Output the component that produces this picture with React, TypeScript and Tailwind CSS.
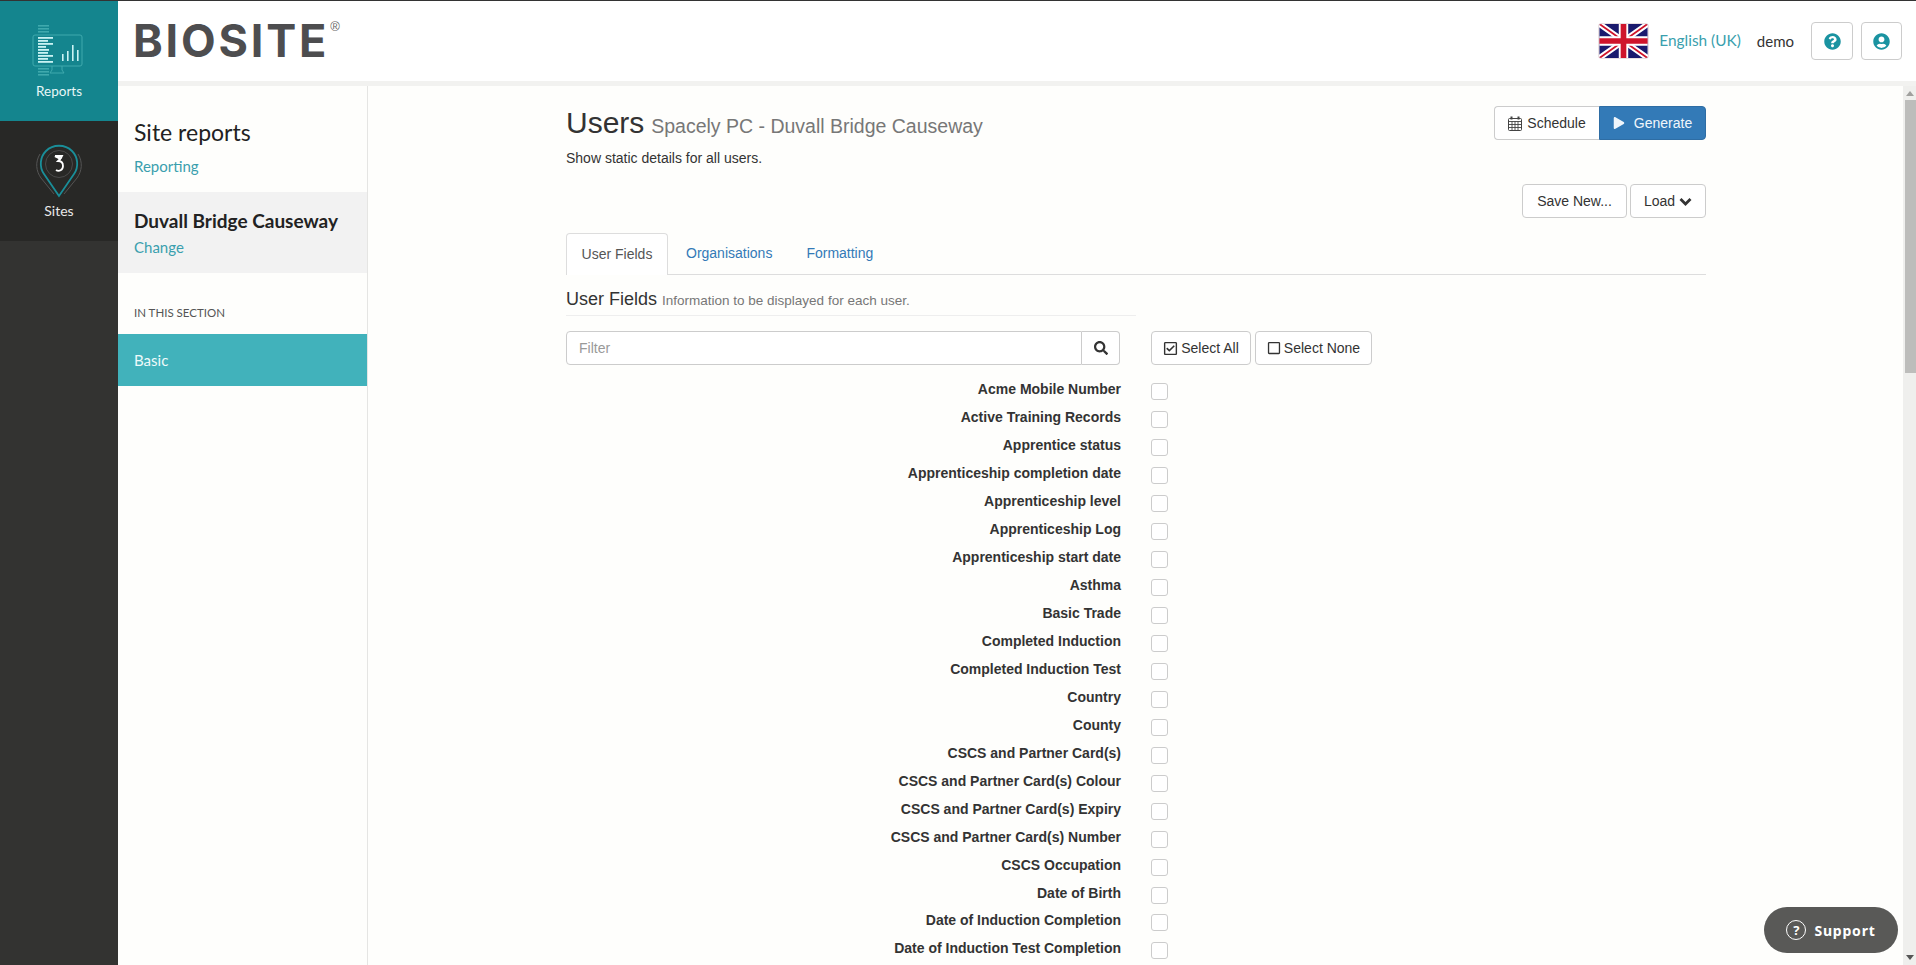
import {
  FaPlay,
  FaQuestionCircle,
  FaRegCheckSquare,
  FaRegSquare,
  FaSearch,
  FaUserCircle,
} from "react-icons/fa";

const sans = "font-['Lato','Noto_Sans',sans-serif]";

const fields = [
  "Acme Mobile Number",
  "Active Training Records",
  "Apprentice status",
  "Apprenticeship completion date",
  "Apprenticeship level",
  "Apprenticeship Log",
  "Apprenticeship start date",
  "Asthma",
  "Basic Trade",
  "Completed Induction",
  "Completed Induction Test",
  "Country",
  "County",
  "CSCS and Partner Card(s)",
  "CSCS and Partner Card(s) Colour",
  "CSCS and Partner Card(s) Expiry",
  "CSCS and Partner Card(s) Number",
  "CSCS Occupation",
  "Date of Birth",
  "Date of Induction Completion",
  "Date of Induction Test Completion",
];

const btn =
  "flex items-center justify-center h-[34px] border border-[#ccc] rounded-[4px] bg-white text-[14px] text-[#333]";

function ReportsIcon() {
  return (
    <svg width="54" height="52" viewBox="0 0 54 52" fill="none">
      <rect x="1" y="10" width="49" height="31" rx="2" stroke="#3fa9ad" strokeWidth="1" />
      <path d="M20 41v4l-2 3h14l-2-3v-4" stroke="#3fa9ad" />
      {[0, 3, 6, 43, 46, 49].map((y) => (
        <rect key={y} x="6" y={y} width="11" height="1.6" fill="#3fa9ad" />
      ))}
      {[12, 15, 18, 21, 24, 27, 30, 33, 36].map((y, i) => (
        <rect key={y} x="6" y={y} width={[15, 10, 15, 8, 11, 10, 15, 10, 15][i]} height="1.8" fill="#c9f3f3" />
      ))}
      {[
        [30, 29],
        [35, 26],
        [40, 20],
        [45, 25],
      ].map(([x, y]) => (
        <rect key={x} x={x} y={y} width="1.6" height={36 - y} fill="#c9f3f3" />
      ))}
    </svg>
  );
}

function SitesIcon() {
  return (
    <svg width="46" height="56" viewBox="0 0 46 56" fill="none">
      <path d="M4 11C-1 19 0 28 5 35l13 16" stroke="#555" />
      <path d="M42 11c5 8 4 17-1 24L28 51" stroke="#555" />
      <path
        d="M23 53 8 31C3 24 4 14 10 8c7-7 19-7 26 0 6 6 7 16 2 23Z"
        stroke="#1a8e99"
        strokeWidth="1.8"
      />
      <circle cx="23" cy="21" r="13.5" stroke="#4a4a4a" />
      <path d="M19 13h7l-1 2-3 3c3 0 5 2 5 5 0 4-4 6-7 4" stroke="#fff" strokeWidth="1.8" />
      <path d="M19 13l6 3" stroke="#fff" strokeWidth="2.4" />
    </svg>
  );
}

function UkFlag() {
  return (
    <svg width="51" height="36" viewBox="0 0 51 36" className="rounded-[3px] border border-[#e8dfe2]">
      <rect width="51" height="36" fill="#1a1a6e" />
      <path d="M0 0 51 36M51 0 0 36" stroke="#fff" strokeWidth="6" />
      <path d="M0 0 51 36M51 0 0 36" stroke="#cf142b" strokeWidth="2" />
      <path d="M25.5 0v36M0 18h51" stroke="#fff" strokeWidth="10" />
      <path d="M25.5 0v36M0 18h51" stroke="#cf142b" strokeWidth="6" />
    </svg>
  );
}

function CalendarIcon() {
  return (
    <svg width="14" height="15" viewBox="0 0 14 15" fill="none" stroke="#444">
      <rect x="0.5" y="2.5" width="13" height="12" rx="1" />
      <path d="M0.5 5.5h13M0.5 8.5h13M0.5 11.5h13M4 5v10M7 5v10M10 5v10" strokeWidth="0.9" />
      <path d="M3.5 0.5v3M10.5 0.5v3" strokeWidth="2" />
    </svg>
  );
}

function ChevronIcon() {
  return (
    <svg width="13" height="9" viewBox="0 0 13 9" fill="none">
      <path d="M1.5 2 6.5 7l5-5" stroke="#333" strokeWidth="2.8" />
    </svg>
  );
}

function Logo() {
  return (
    <div className="flex items-start text-[#4d4d4f]">
      <span className="font-['Inter',sans-serif] text-[45px] font-bold leading-[44px] tracking-[2.8px]">
        BIOSITE
      </span>
      <span className="ml-[1px] mt-[1px] font-['Liberation_Sans',sans-serif] text-[13px] leading-[14px] text-[#666]">
        ®
      </span>
    </div>
  );
}

function FieldRow({ label }: { label: string }) {
  return (
    <div className={label === "Date of Birth" ? "flex h-[27px] items-start" : "flex h-[28px] items-start"}>
      <label className="w-[555px] pt-[1px] text-right text-[14px] font-bold leading-[20px] text-[#333]">
        {label}
      </label>
      <span className="ml-[30px] mt-[5px] h-[17px] w-[17px] rounded-[3px] border border-[#ccc] bg-white" />
    </div>
  );
}

export default function App() {
  return (
    <div className="flex h-[965px] w-[1916px] overflow-hidden border-t border-[#333] bg-[#fefefc] font-['Liberation_Sans',Arial,sans-serif] text-[#333]">
      <aside className={`flex w-[118px] shrink-0 flex-col bg-[#333331] text-white ${sans}`}>
        <a className="flex h-[120px] flex-col items-center bg-[#14858e] pt-[24px] text-[13.5px]">
          <ReportsIcon />
          <span className="mt-[5px] leading-[18px] text-[#e8f7f7]">Reports</span>
        </a>
        <a className="flex h-[120px] flex-col items-center bg-[#282826] pt-[22px] text-[14px]">
          <SitesIcon />
          <span className="mt-[3px] leading-[18px] text-[#e8e8e8]">Sites</span>
        </a>
      </aside>

      <div className="flex min-w-0 flex-1 flex-col">
        <header className="flex h-[80px] shrink-0 items-center justify-between bg-white pl-[15px] pr-[14px]">
          <Logo />
          <div className={`flex items-center ${sans}`}>
            <UkFlag />
            <a className="ml-[10px] text-[15.4px] text-[#3a9fae]">English (UK)</a>
            <span className="ml-[16px] text-[15px] text-[#333]">demo</span>
            <button className="ml-[17px] flex h-[38px] w-[42px] items-center justify-center rounded-[4px] border border-[#ccc] bg-white text-[17px] text-[#1a93a1]">
              <FaQuestionCircle />
            </button>
            <button className="ml-[8px] flex h-[38px] w-[41px] items-center justify-center rounded-[4px] border border-[#ccc] bg-white text-[17px] text-[#1a93a1]">
              <FaUserCircle />
            </button>
          </div>
        </header>
        <div className="h-[5px] shrink-0 bg-[#f2f2f0]" />

        <div className="flex min-h-0 flex-1">
          <nav className={`w-[250px] shrink-0 border-r border-[#e5e5e3] ${sans}`}>
            <div className="h-[106px] pl-[16px] pt-[31px]">
              <h2 className="text-[23px] leading-[30px] text-[#222]">Site reports</h2>
              <a className="mt-[9px] block text-[15px] leading-[20px] text-[#3a9fae]">Reporting</a>
            </div>
            <div className="h-[81px] bg-[#f2f2f2] pl-[16px] pt-[17px]">
              <div className="text-[19px] font-bold leading-[24px] text-[#222]">Duvall Bridge Causeway</div>
              <a className="mt-[4px] block text-[15px] leading-[20px] text-[#3a9fae]">Change</a>
            </div>
            <div className="pl-[16px] pt-[32px] text-[11.5px] leading-[16px] text-[#555]">IN THIS SECTION</div>
            <a className="mt-[13px] flex h-[52px] items-center bg-[#41b2bb] pl-[16px] text-[15px] text-[#eefafa]">
              Basic
            </a>
          </nav>

          <main className="min-w-0 flex-1 overflow-hidden pl-[198px] pr-[197px]">
            <div className="flex items-start justify-between pt-[20px]">
              <div>
                <h1 className="text-[30px] font-normal leading-[33px] text-[#333]">
                  Users{" "}
                  <small className="-ml-[1.5px] text-[19.5px] text-[#777]">Spacely PC - Duvall Bridge Causeway</small>
                </h1>
                <p className="mt-[5px] text-[14px] leading-[20px]">Show static details for all users.</p>
              </div>
              <div className="flex">
                <button className={`${btn} w-[105px] gap-[5px] rounded-r-none border-r-0 leading-[18px]`}>
                  <CalendarIcon />
                  Schedule
                </button>
                <button className="flex h-[34px] w-[107px] items-center justify-center gap-[9px] rounded-r-[4px] border border-[#2e6da4] bg-[#337ab7] text-[14px] text-[#f0f6fb]">
                  <FaPlay className="text-[12px]" />
                  Generate
                </button>
              </div>
            </div>

            <div className="mt-[16px] flex justify-end gap-[3px]">
              <button className={`${btn} w-[105px]`}>Save New...</button>
              <button className={`${btn} w-[76px] gap-[4px]`}>
                Load
                <ChevronIcon />
              </button>
            </div>

            <div className="mt-[15px] flex h-[42px] border-b border-[#ddd] text-[14px]">
              <a className="flex h-[42px] w-[102px] items-center justify-center rounded-t-[4px] border border-b-0 border-[#ddd] bg-white text-[#555]">
                User Fields
              </a>
              <a className="flex h-[41px] items-center px-[18px] text-[#337ab7]">Organisations</a>
              <a className="flex h-[41px] items-center px-[16px] pb-[1px] text-[#337ab7]">Formatting</a>
            </div>

            <div className="mt-[14px] w-[570px] border-b border-[#eee] pb-[4px] text-[18px] leading-[20px]">
              User Fields <small className="text-[13.5px] text-[#777]">Information to be displayed for each user.</small>
            </div>

            <div className="mt-[15px] flex">
              <div className="flex h-[34px] w-[554px]">
                <input
                  placeholder="Filter"
                  className="min-w-0 flex-1 rounded-l-[4px] border border-[#ccc] bg-white px-[12px] text-[14px] outline-none placeholder:text-[#999]"
                />
                <button className={`${btn} w-[38px] rounded-l-none border-l-0`}>
                  <FaSearch className="text-[14px]" />
                </button>
              </div>
              <div className="ml-[31px] flex gap-[4px]">
                <button className={`${btn} w-[100px] gap-[3px]`}>
                  <FaRegCheckSquare className="text-[15px]" />
                  Select All
                </button>
                <button className={`${btn} w-[117px] gap-[3px]`}>
                  <FaRegSquare className="text-[14px]" />
                  Select None
                </button>
              </div>
            </div>

            <div className="mt-[13px]">
              {fields.map((f) => (
                <FieldRow key={f} label={f} />
              ))}
            </div>
          </main>

          <div className="flex w-[13px] shrink-0 flex-col items-center bg-[#efefed]">
            <span className="mt-[5px] h-0 w-0 border-x-[4px] border-b-[5px] border-x-transparent border-b-[#a0a09e]" />
            <span className="mt-[4px] h-[273px] w-[11px] self-end bg-[#bdbdbb]" />
            <span className="mb-[5px] mt-auto h-0 w-0 border-x-[4px] border-t-[5px] border-x-transparent border-t-[#555]" />
          </div>
        </div>
      </div>

      <button className="fixed bottom-[12px] right-[18px] flex h-[46px] w-[134px] items-center justify-center gap-[8px] rounded-full bg-[#595957] font-['Noto_Sans',sans-serif] text-[14px] font-bold tracking-[0.8px] text-white">
        <span className="flex h-[20px] w-[20px] items-center justify-center rounded-full border-[1.5px] border-white text-[13px] leading-none tracking-normal">
          ?
        </span>
        Support
      </button>
    </div>
  );
}
